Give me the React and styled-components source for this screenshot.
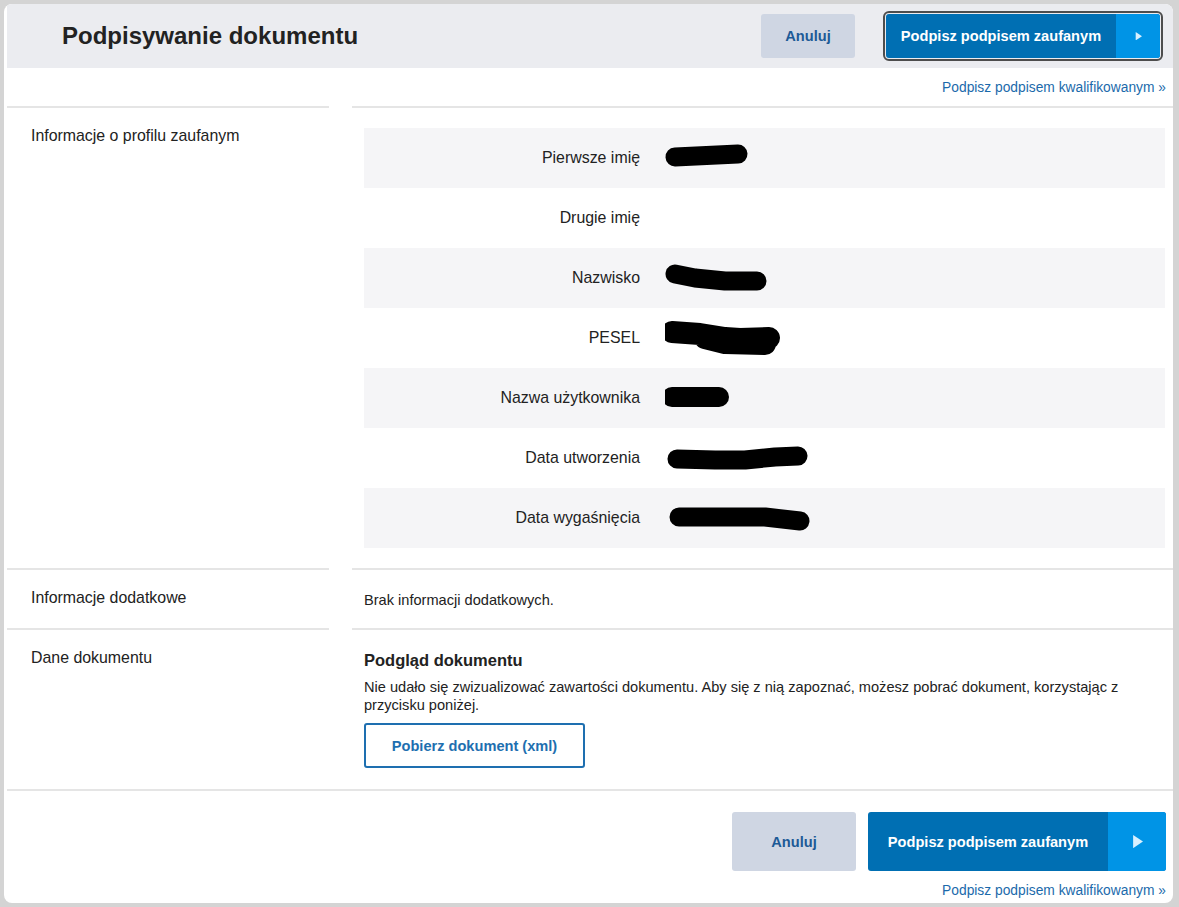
import React from 'react'
import styled, { createGlobalStyle } from 'styled-components'

const GlobalStyle = createGlobalStyle`
  html, body {
    margin: 0;
    padding: 0;
    background: #d4d4d4;
    font-family: "Liberation Sans", Arial, sans-serif;
    color: #222;
  }
`;

const Frame = styled.div`
  padding: 4px 6px 4px 4px;
  height: 907px;
  box-sizing: border-box;
`;

const Card = styled.div`
  background: #fff;
  border-radius: 8px;
  height: 100%;
  padding-left: 3px;
  box-sizing: border-box;
  overflow: hidden;
  display: flex;
  flex-direction: column;
`;

const Header = styled.header`
  height: 64px;
  background: #ebecf0;
  display: flex;
  align-items: center;
  padding: 0 13px 0 55px;
`;

const Title = styled.h1`
  margin: 0;
  flex: 1;
  font-size: 24px;
  font-weight: bold;
  color: #222;
`;

const Actions = styled.div`
  display: flex;
  align-items: center;
  gap: ${p => p.$gap}px;
`;

const CancelButton = styled.button`
  width: ${p => p.$w}px;
  height: ${p => p.$h}px;
  border: none;
  border-radius: 3px;
  background: #cfd6e3;
  color: #1d5a96;
  font: bold 14.6px "Liberation Sans", Arial, sans-serif;
  cursor: pointer;
`;

const SignButton = styled.button`
  display: flex;
  height: ${p => p.$h}px;
  padding: 0;
  border: none;
  border-radius: 3px;
  overflow: hidden;
  background: #006fb3;
  color: #fff;
  font: bold 14.6px "Liberation Sans", Arial, sans-serif;
  cursor: pointer;
  ${p => p.$focused && `
    outline: 2px solid #4d4d4d;
    outline-offset: 1px;
  `}
`;

const SignLabel = styled.span`
  width: ${p => p.$w}px;
  display: flex;
  align-items: center;
  justify-content: center;
`;

const SignArrow = styled.span`
  width: ${p => p.$w}px;
  background: #0094e6;
  display: flex;
  align-items: center;
  justify-content: center;
`;

const LinkRow = styled.div`
  display: flex;
  justify-content: flex-end;
  padding: ${p => p.$pad};
`;

const QualifiedLink = styled.a`
  color: #1b6aab;
  font-size: 13.8px;
  text-decoration: none;
`;

const Section = styled.section`
  display: grid;
  grid-template-columns: 322px 1fr;
  column-gap: 23px;
`;

const SideLabel = styled.div`
  border-top: 2px solid #e5e5e5;
  padding: ${p => p.$top}px 0 0 24px;
  font-size: 15.9px;
`;

const Body = styled.div`
  border-top: 2px solid #e5e5e5;
  padding: ${p => p.$top}px 8px ${p => p.$bottom}px 12px;
`;

const Row = styled.div`
  display: grid;
  grid-template-columns: 276px 1fr;
  column-gap: 25px;
  align-items: center;
  height: 60px;
  background: ${p => (p.$shaded ? '#f5f5f7' : 'transparent')};
  font-size: 15.9px;
`;

const RowLabel = styled.div`
  text-align: right;
`;

const RowValue = styled.div`
  position: relative;
  height: 60px;
`;

const Note = styled.p`
  margin: 0;
  font-size: 14.6px;
`;

const PreviewTitle = styled.h3`
  margin: 0 0 8px;
  font-size: 16.5px;
  font-weight: bold;
`;

const PreviewText = styled.p`
  margin: 0 0 9px;
  font-size: 14.6px;
  line-height: 18px;
`;

const DownloadButton = styled.button`
  width: 221px;
  height: 45px;
  background: #fff;
  border: 2px solid #1e6fb0;
  border-radius: 3px;
  color: #1e6fb0;
  font: bold 14.6px "Liberation Sans", Arial, sans-serif;
  cursor: pointer;
`;

const Footer = styled.footer`
  border-top: 2px solid #e5e5e5;
  margin-top: 21px;
  padding: 21px 7px 0 0;
  display: flex;
  justify-content: flex-end;
`;

const Play = ({ size }) => (
  <svg width={size} height={size * 1.2} viewBox="0 0 10 12">
    <path d="M1 0 L10 6 L1 12 Z" fill="#d8f0ff" />
  </svg>
);

// marker scribbles over personal data
const Scribble = ({ d, w = 19 }) => (
  <svg width="170" height="60" style={{ position: 'absolute', left: 0, top: 0 }}>
    <path d={d} fill="none" stroke="#000" strokeWidth={w} strokeLinecap="round" strokeLinejoin="round" />
  </svg>
);

const rows = [
  { label: 'Pierwsze imię', d: 'M10 29 L73 26' },
  { label: 'Drugie imię' },
  { label: 'Nazwisko', d: 'M10 26 L30 30 L60 33 L92 33' },
  { label: 'PESEL', d: 'M7 24 L35 26 L60 30 L75 31 L104 30 M40 30 L60 35 L100 36', w: 22 },
  { label: 'Nazwa użytkownika', d: 'M7 29 L54 29', w: 20 },
  { label: 'Data utworzenia', d: 'M12 31 L50 32 L80 32 L110 29 L133 28' },
  { label: 'Data wygaśnięcia', d: 'M14 29 L100 29 L135 33' },
];

const App = () => (
  <>
    <GlobalStyle />
    <Frame>
      <Card>
        <Header>
          <Title>Podpisywanie dokumentu</Title>
          <Actions $gap={31}>
            <CancelButton $w={94} $h={44}>Anuluj</CancelButton>
            <SignButton $h={44} $focused>
              <SignLabel $w={230}>Podpisz podpisem zaufanym</SignLabel>
              <SignArrow $w={44}><Play size={7} /></SignArrow>
            </SignButton>
          </Actions>
        </Header>
        <LinkRow $pad="12px 7px 11px 0">
          <QualifiedLink href="#">Podpisz podpisem kwalifikowanym »</QualifiedLink>
        </LinkRow>

        <Section>
          <SideLabel $top={19}>Informacje o profilu zaufanym</SideLabel>
          <Body $top={20} $bottom={20}>
            {rows.map((r, i) => (
              <Row key={r.label} $shaded={i % 2 === 0}>
                <RowLabel>{r.label}</RowLabel>
                <RowValue>{r.d && <Scribble d={r.d} w={r.w} />}</RowValue>
              </Row>
            ))}
          </Body>
        </Section>

        <Section>
          <SideLabel $top={19}>Informacje dodatkowe</SideLabel>
          <Body $top={22} $bottom={20}>
            <Note>Brak informacji dodatkowych.</Note>
          </Body>
        </Section>

        <Section>
          <SideLabel $top={19}>Dane dokumentu</SideLabel>
          <Body $top={21} $bottom={0}>
            <PreviewTitle>Podgląd dokumentu</PreviewTitle>
            <PreviewText>
              Nie udało się zwizualizować zawartości dokumentu. Aby się z nią zapoznać, możesz pobrać dokument, korzystając z przycisku poniżej.
            </PreviewText>
            <DownloadButton>Pobierz dokument (xml)</DownloadButton>
          </Body>
        </Section>

        <Footer>
          <Actions $gap={12}>
            <CancelButton $w={124} $h={59}>Anuluj</CancelButton>
            <SignButton $h={59}>
              <SignLabel $w={240}>Podpisz podpisem zaufanym</SignLabel>
              <SignArrow $w={58}><Play size={11} /></SignArrow>
            </SignButton>
          </Actions>
        </Footer>
        <LinkRow $pad="12px 7px 0 0">
          <QualifiedLink href="#">Podpisz podpisem kwalifikowanym »</QualifiedLink>
        </LinkRow>
      </Card>
    </Frame>
  </>
);

export default App
